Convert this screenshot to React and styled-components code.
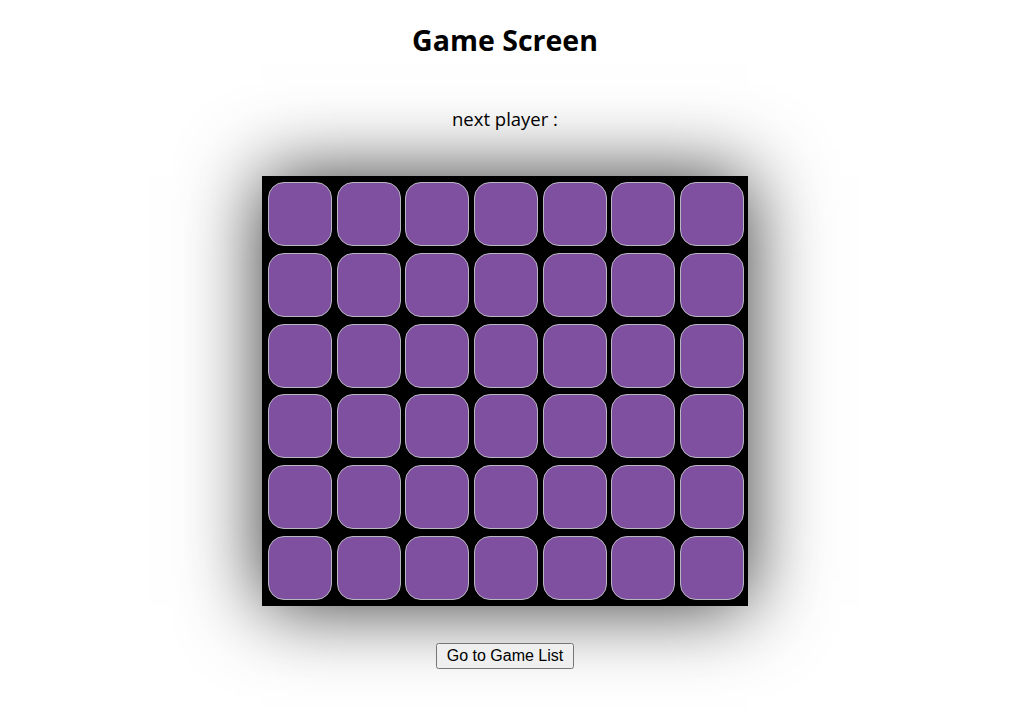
import styled, { createGlobalStyle } from 'styled-components'

const ROWS = 6
const COLS = 7

const GlobalStyle = createGlobalStyle`
    body {
        margin: 0;
        background: #fff;
        font-family: "Open Sans", "Noto Sans", sans-serif;
        color: #000;
    }
`

const Page = styled.div`
    display: flex;
    flex-direction: column;
    align-items: center;
    padding-bottom: 40px;
`

const Title = styled.h1`
    margin: 19px 0 0;
    font-size: 28.5px;
    line-height: 42px;
    font-weight: 700;
`

const NextPlayer = styled.p`
    margin: 44px 0 0;
    font-size: 18.5px;
    line-height: 28px;
`

const Board = styled.div`
    margin-top: 43px;
    width: 486px;
    height: 430px;
    box-sizing: border-box;
    padding: 6px 4px 6px 6px;
    background: #000;
    display: grid;
    grid-template-columns: repeat(${COLS}, 64px);
    grid-auto-rows: 64px;
    column-gap: 4.67px;
    row-gap: 6.8px;
    box-shadow: 0 0 75px rgba(0, 0, 0, 0.8);
`

const Cell = styled.div`
    box-sizing: border-box;
    border: 1px solid #b8b8c0;
    border-radius: 16px;
    background: ${props => props.color || '#8050a0'};
    cursor: pointer;
`

const BackButton = styled.button`
    margin-top: 37px;
    font-family: "Liberation Sans", Arial, sans-serif;
    font-size: 16px;
    padding: 2px 9px;
    height: 26px;
`

const App = () => {
    const cells = []
    for (let r = 0; r < ROWS; r++) {
        for (let c = 0; c < COLS; c++) {
            cells.push(<Cell key={r + '-' + c} />)
        }
    }
    return (
        <Page>
            <GlobalStyle />
            <Title>Game Screen</Title>
            <NextPlayer>next player :</NextPlayer>
            <Board>{cells}</Board>
            <BackButton>Go to Game List</BackButton>
        </Page>
    )
}

export default App
